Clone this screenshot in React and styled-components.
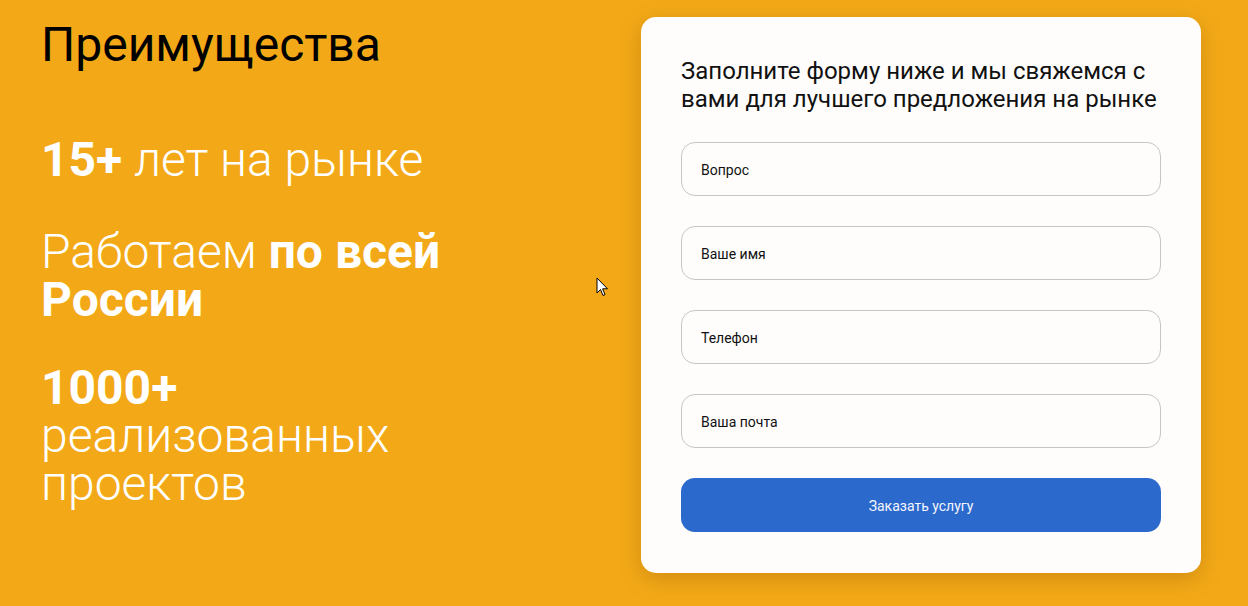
import React from "react";
import styled, { createGlobalStyle } from "styled-components";

const GlobalStyle = createGlobalStyle`
  html, body {
    margin: 0;
    padding: 0;
    background: #f3a917;
    font-family: Roboto, "Noto Sans", sans-serif;
  }
  * { box-sizing: border-box; }
`;

const Page = styled.div`
  position: relative;
  width: 1248px;
  height: 606px;
  background: #f3a917;
  display: flex;
  justify-content: space-between;
  align-items: flex-start;
  padding: 17px 47px 0 41px;
  overflow: hidden;
`;

const Advantages = styled.div`
  width: 430px;
  display: flex;
  flex-direction: column;
`;

const Title = styled.h2`
  margin: 0 0 63px;
  font-size: 48px;
  font-weight: 400;
  line-height: 56px;
  color: #000;
`;

const Fact = styled.p`
  margin: 0 0 ${(p) => p.$gap}px;
  font-size: 48px;
  font-weight: 300;
  line-height: 48px;
  color: #fff;

  b {
    font-weight: 700;
  }
`;

const Card = styled.form`
  width: 560px;
  height: 556px;
  background: #fefdfc;
  border-radius: 15px;
  box-shadow: 0 6px 22px rgba(120, 70, 0, 0.28);
  padding: 40px 40px;
  display: flex;
  flex-direction: column;
`;

const CardTitle = styled.h3`
  margin: 0 0 29px;
  font-size: 24px;
  font-weight: 400;
  line-height: 28px;
  color: #111;
`;

const Fields = styled.div`
  display: flex;
  flex-direction: column;
  gap: 30px;
`;

const Input = styled.input`
  width: 100%;
  height: 54px;
  border: 1px solid #c6c6c6;
  border-radius: 14px;
  background: #fefdfc;
  padding: 2px 19px 0;
  font-family: Roboto, "Noto Sans", sans-serif;
  font-size: 14px;
  color: #111;
  outline: none;

  &::placeholder {
    color: #111;
    opacity: 1;
  }
`;

const Submit = styled.button`
  width: 100%;
  height: 54px;
  border: none;
  border-radius: 14px;
  background: #2c69cd;
  color: #f4f6fb;
  padding: 2px 0 0;
  font-family: Roboto, "Noto Sans", sans-serif;
  font-size: 14px;
  cursor: pointer;
`;

const Pointer = styled.svg`
  position: absolute;
  left: 596px;
  top: 277px;
  pointer-events: none;
`;

export default function App() {
  return (
    <>
      <GlobalStyle />
      <Page>
        <Advantages>
          <Title>Преимущества</Title>
          <Fact $gap={44}>
            <b>15+</b> лет на рынке
          </Fact>
          <Fact $gap={40}>
            Работаем <b>по всей России</b>
          </Fact>
          <Fact $gap={0}>
            <b>1000+</b>
            <br />
            реализованных проектов
          </Fact>
        </Advantages>
        <Card onSubmit={(e) => e.preventDefault()}>
          <CardTitle>
            Заполните форму ниже и мы свяжемся с вами для лучшего предложения
            на рынке
          </CardTitle>
          <Fields>
            <Input placeholder="Вопрос" />
            <Input placeholder="Ваше имя" />
            <Input placeholder="Телефон" />
            <Input placeholder="Ваша почта" />
            <Submit type="submit">Заказать услугу</Submit>
          </Fields>
        </Card>
        <Pointer width="13" height="21" viewBox="0 0 13 21">
          <path
            d="M1 1 L1 16 L4.5 12.5 L7 18.5 L9 17.6 L6.6 11.8 L11.5 11.8 Z"
            fill="#fff"
            stroke="#000"
            strokeWidth="1"
            strokeLinejoin="miter"
          />
        </Pointer>
      </Page>
    </>
  );
}
